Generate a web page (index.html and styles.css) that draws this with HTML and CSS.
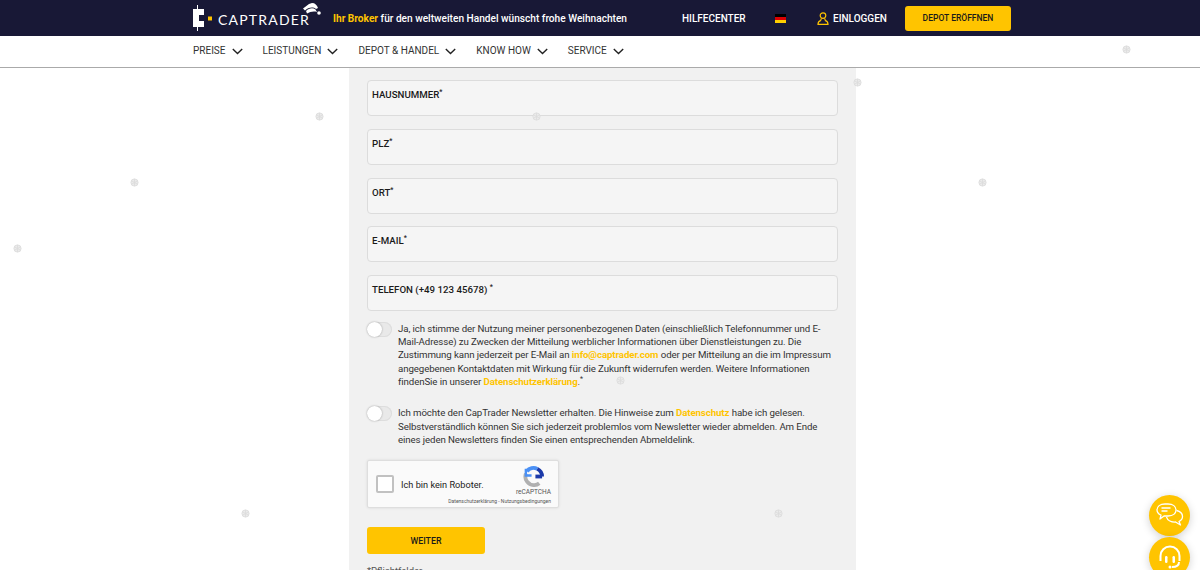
FILE: index.html
```html
<!DOCTYPE html>
<html lang="de">
<head>
    <meta charset="UTF-8">
    <meta name="viewport" content="width=device-width, initial-scale=1.0">
    <title>CapTrader - Depot eröffnen</title>
    <link rel="stylesheet" href="styles.css">
</head>
<body>

    <header class="topbar">
        <a class="logo" href="#">
            <svg class="logo-mark" width="19" height="26" viewBox="0 0 19 26">
                <path d="M4 0h1v4H4zM4 22h1v4H4z" fill="#fff"/>
                <path d="M0 4h11v6H6v6h5v6H0z" fill="#fff"/>
                <rect x="15" y="11.500" width="4" height="4" fill="#ffc400"/>
            </svg>
            <span class="logo-text">CAPTRADER</span>
            <svg class="logo-hat" width="18" height="12" viewBox="0 0 18 12">
                <path d="M0 5.500 6 1l3-1c3 0 5 2 6 5l-2 1C10 3.500 5 4.500 2 7.500z" fill="#fff"/>
                <path d="M3 8c3-3 7-3.500 9.500-1.500L14 9c-4-1-7 0-10 1.500z" fill="#fff"/>
                <circle cx="16" cy="10" r="1.800" fill="#fff"/>
            </svg>
        </a>
        <p class="tagline"><b>Ihr Broker</b> für den weltweiten Handel wünscht frohe Weihnachten</p>
        <a class="top-link help" href="#">HILFECENTER</a>
        <span class="flag"></span>
        <svg class="user-icon" width="12" height="13" viewBox="0 0 12 13" fill="none" stroke="#ffc400" stroke-width="1.200">
            <circle cx="6" cy="3.600" r="2.800"/>
            <path d="M4.400 6.400 3.600 8.600C2 9 1 10 1 12.400h10C11 10 10 9 8.400 8.600L7.600 6.400"/>
        </svg>
        <a class="top-link login" href="#">EINLOGGEN</a>
        <a class="btn-depot" href="#">DEPOT ERÖFFNEN</a>
    </header>

    <nav class="mainnav">
        <a href="#">PREISE <svg class="chev" width="11" height="7" viewBox="0 0 11 7"><path d="M.8 1l4.700 4.600L10.200 1"/></svg></a>
        <a href="#">LEISTUNGEN <svg class="chev" width="11" height="7" viewBox="0 0 11 7"><path d="M.8 1l4.700 4.600L10.200 1"/></svg></a>
        <a href="#">DEPOT &amp; HANDEL <svg class="chev" width="11" height="7" viewBox="0 0 11 7"><path d="M.8 1l4.700 4.600L10.200 1"/></svg></a>
        <a href="#">KNOW HOW <svg class="chev" width="11" height="7" viewBox="0 0 11 7"><path d="M.8 1l4.700 4.600L10.200 1"/></svg></a>
        <a href="#">SERVICE <svg class="chev" width="11" height="7" viewBox="0 0 11 7"><path d="M.8 1l4.700 4.600L10.200 1"/></svg></a>
    </nav>

    <main class="panel">
        <form class="form">
            <label class="field">HAUSNUMMER<sup>*</sup></label>
            <label class="field">PLZ<sup>*</sup></label>
            <label class="field">ORT<sup>*</sup></label>
            <label class="field">E-MAIL<sup>*</sup></label>
            <label class="field">TELEFON (+49 123 45678) <sup>*</sup></label>

            <div class="consent first">
                <span class="toggle"></span>
                <p>Ja, ich stimme der Nutzung meiner personenbezogenen Daten (einschließlich Telefonnummer und E-Mail-Adresse) zu Zwecken der Mitteilung werblicher Informationen über Dienstleistungen zu. Die Zustimmung kann jederzeit per E-Mail an <a href="#">info@captrader.com</a> oder per Mitteilung an die im Impressum angegebenen Kontaktdaten mit Wirkung für die Zukunft widerrufen werden. Weitere Informationen findenSie in unserer <a href="#">Datenschutzerklärung</a>.<sup>*</sup></p>
            </div>

            <div class="consent">
                <span class="toggle"></span>
                <p>Ich möchte den CapTrader Newsletter erhalten. Die Hinweise zum <a href="#">Datenschutz</a> habe ich gelesen. Selbstverständlich können Sie sich jederzeit problemlos vom Newsletter wieder abmelden. Am Ende eines jeden Newsletters finden Sie einen entsprechenden Abmeldelink.</p>
            </div>

            <div class="captcha">
                <span class="captcha-box"></span>
                <span class="captcha-label">Ich bin kein Roboter.</span>
                <div class="captcha-brand">
                    <svg width="21" height="21" viewBox="0 0 22 22" fill="none" stroke-width="4">
                        <path d="M4 5.500A9 9 0 0 1 15 3" stroke="#4a90f5"/>
                        <path d="M15 3a9 9 0 0 1 5 8" stroke="#1c3aa9"/>
                        <path d="M20 11h-7" stroke="#1c3aa9"/>
                        <path d="M3 8a9 9 0 0 0 9 12 9 9 0 0 0 5-2" stroke="#b0b0b0"/>
                        <path d="M3 3v7h6" stroke="#4a90f5" stroke-width="2.500"/>
                    </svg>
                    <span class="captcha-name">reCAPTCHA</span>
                </div>
                <span class="captcha-terms">Datenschutzerklärung - Nutzungsbedingungen</span>
            </div>

            <button class="btn-next" type="button">WEITER</button>
            <p class="required">*Pflichtfelder</p>
        </form>
    </main>

    <a class="fab chat" href="#">
        <svg width="28" height="26" viewBox="0 0 28 26" fill="none" stroke="#fff" stroke-width="1.300" stroke-linejoin="round">
            <path d="M9 1h3c5 0 8 2.500 8 6s-3 6-8 6H8l-4 3 1-3.800C2.500 11 1 9.300 1 7c0-3.500 3-6 8-6z"/>
            <path d="M5.500 5h9M5.500 8h6"/>
            <path d="M20.500 7.500c3.500.8 6 3 6 6 0 2.200-1.300 4-3.500 5l1.500 3.500-5-3c-4 .3-8-1.500-9-5"/>
        </svg>
    </a>
    <a class="fab support" href="#">
        <svg width="26" height="28" viewBox="0 0 26 28" fill="none" stroke="#fff" stroke-width="2">
            <path d="M3.500 17v-5a9.500 9.500 0 0 1 19 0v5"/>
            <rect x="8" y="12" width="2.500" height="7" rx="1.200" fill="#fff" stroke="none"/>
            <rect x="15.500" y="12" width="2.500" height="7" rx="1.200" fill="#fff" stroke="none"/>
            <path d="M22 18c0 3.500-3 5-7 5"/>
            <circle cx="13" cy="23" r="1.500" fill="#fff" stroke="none"/>
        </svg>
    </a>

    <!-- Schneeflocken -->
    <svg class="flake" style="left:1121px;top:44px" viewBox="0 0 10 10"><circle cx="5" cy="5" r="4"/><path d="M5 1v8M1.500 3l7 4M1.500 7l7-4"/></svg>
    <svg class="flake" style="left:852px;top:77px" viewBox="0 0 10 10"><circle cx="5" cy="5" r="4"/><path d="M5 1v8M1.500 3l7 4M1.500 7l7-4"/></svg>
    <svg class="flake" style="left:314px;top:111px" viewBox="0 0 10 10"><circle cx="5" cy="5" r="4"/><path d="M5 1v8M1.500 3l7 4M1.500 7l7-4"/></svg>
    <svg class="flake" style="left:531px;top:111px" viewBox="0 0 10 10"><circle cx="5" cy="5" r="4"/><path d="M5 1v8M1.500 3l7 4M1.500 7l7-4"/></svg>
    <svg class="flake" style="left:129px;top:177px" viewBox="0 0 10 10"><circle cx="5" cy="5" r="4"/><path d="M5 1v8M1.500 3l7 4M1.500 7l7-4"/></svg>
    <svg class="flake" style="left:977px;top:177px" viewBox="0 0 10 10"><circle cx="5" cy="5" r="4"/><path d="M5 1v8M1.500 3l7 4M1.500 7l7-4"/></svg>
    <svg class="flake" style="left:12px;top:243px" viewBox="0 0 10 10"><circle cx="5" cy="5" r="4"/><path d="M5 1v8M1.500 3l7 4M1.500 7l7-4"/></svg>
    <svg class="flake" style="left:615px;top:375px" viewBox="0 0 10 10"><circle cx="5" cy="5" r="4"/><path d="M5 1v8M1.500 3l7 4M1.500 7l7-4"/></svg>
    <svg class="flake" style="left:240px;top:508px" viewBox="0 0 10 10"><circle cx="5" cy="5" r="4"/><path d="M5 1v8M1.500 3l7 4M1.500 7l7-4"/></svg>
    <svg class="flake" style="left:773px;top:508px" viewBox="0 0 10 10"><circle cx="5" cy="5" r="4"/><path d="M5 1v8M1.500 3l7 4M1.500 7l7-4"/></svg>

</body>
</html>
```

FILE: styles.css
```css
html, body {
    height: 570px;
    overflow: hidden;
}
body {
    margin: 0;
    background-color: #fff;
    font-family: "Roboto", "Open Sans", sans-serif;
    color: #1a1a1a;
    position: relative;
}
a {
    text-decoration: none;
    color: inherit;
}
.topbar {
    height: 36px;
    background-color: #181836;
    display: flex;
    align-items: center;
    padding-left: 193px;
    color: #fff;
}
.logo {
    display: flex;
    align-items: center;
    width: 140px;
    position: relative;
}
.logo-mark {
    margin-right: 6px;
}
.logo-text {
    font-family: "Lato", sans-serif;
    font-weight: 400;
    font-size: 14px;
    letter-spacing: 1.200px;
    margin-top: 3px;
}
.logo-hat {
    position: absolute;
    left: 110px;
    top: -2px;
}
.tagline {
    margin: 0;
    width: 349px;
    font-size: 10.150px;
    font-weight: 500;
    white-space: nowrap;
}
.tagline b {
    color: #ffc400;
    font-weight: 700;
}
.top-link {
    font-size: 10px;
    font-weight: 500;
}
.help {
    width: 93px;
}
.login {
    width: 72px;
}
.flag {
    width: 11px;
    height: 9px;
    margin-right: 31px;
    background: linear-gradient(#000 33%, #d00 33%, #d00 66%, #ffce00 66%);
}
.user-icon {
    margin-right: 4px;
}
.btn-depot {
    width: 106px;
    height: 25px;
    line-height: 25px;
    text-align: center;
    background-color: #ffc400;
    border-radius: 3px;
    color: #1a1a1a;
    font-size: 8.500px;
    font-weight: 500;
}
.mainnav {
    height: 29px;
    padding: 0 0 2px 193px;
    display: flex;
    align-items: center;
    gap: 20px;
    border-bottom: 1px solid #aaa;
    background-color: #fff;
    font-size: 10px;
    color: #333;
}
.mainnav a {
    display: flex;
    align-items: center;
    gap: 6px;
}
.chev {
    fill: none;
    stroke: #222;
    stroke-width: 1.400;
    margin-top: 2px;
}
.panel {
    width: 471px;
    margin-left: 349px;
    padding: 12px 18px 0;
    background-color: #f1f1f1;
    height: 490px;
}
.form {
    display: flex;
    flex-direction: column;
}
.field {
    display: block;
    box-sizing: border-box;
    height: 36px;
    margin-bottom: 12.750px;
    padding: 7px 4px 0;
    background-color: #f5f5f5;
    border: 1px solid #dcdcdc;
    border-radius: 4px;
    font-size: 9.700px;
    font-weight: 500;
    line-height: 13px;
    color: #1a1a1a;
}
sup {
    font-size: 7px;
    line-height: 0;
}
.consent {
    display: flex;
    gap: 6px;
    margin-bottom: 18px;
    font-size: 9.700px;
    letter-spacing: -0.100px;
    line-height: 13.300px;
    color: #333;
}
.consent.first {
    margin-top: -2px;
}
.consent p {
    margin: 0;
}
.consent a {
    color: #ffc400;
    font-weight: 700;
}
.toggle {
    flex: none;
    width: 25px;
    height: 15px;
    border-radius: 8px;
    background-color: #e9e9e9;
    position: relative;
    box-shadow: inset 0 0 0 1px #ddd;
}
.toggle::before {
    content: "";
    position: absolute;
    left: 0;
    top: 0;
    width: 15px;
    height: 15px;
    border-radius: 50%;
    background-color: #fff;
    box-shadow: 0 0 2px rgba(0, 0, 0, 0.35);
}
.captcha {
    box-sizing: border-box;
    width: 192px;
    height: 48px;
    background-color: #fafafa;
    border: 1px solid #dedede;
    box-shadow: 0 0 3px rgba(0, 0, 0, 0.1);
    border-radius: 2px;
    display: flex;
    align-items: center;
    padding-left: 8px;
    position: relative;
    margin-top: -4px;
}
.captcha-box {
    box-sizing: border-box;
    width: 18px;
    height: 18px;
    background-color: #fff;
    border: 2px solid #c1c1c1;
    border-radius: 2px;
    margin-right: 7px;
}
.captcha-label {
    font-size: 9.200px;
    color: #222;
}
.captcha-brand {
    position: absolute;
    right: 7px;
    top: 5px;
    display: flex;
    flex-direction: column;
    align-items: center;
    gap: 1px;
}
.captcha-name {
    font-size: 6.500px;
    color: #555;
}
.captcha-terms {
    position: absolute;
    right: 7px;
    bottom: 3px;
    font-size: 5px;
    color: #555;
    white-space: nowrap;
}
.btn-next {
    width: 118px;
    height: 27px;
    margin-top: 19px;
    padding: 0;
    background-color: #ffc400;
    border: 0;
    border-radius: 3px;
    color: #1a1a1a;
    font-family: inherit;
    font-size: 8.800px;
    font-weight: 500;
}
.required {
    margin: 11px 0 0;
    font-size: 9.500px;
    color: #555;
}
.fab {
    position: absolute;
    left: 1149px;
    width: 41px;
    height: 41px;
    border-radius: 50%;
    background-color: #ffc400;
    box-shadow: 0 2px 8px rgba(0, 0, 0, 0.18);
    display: flex;
    align-items: center;
    justify-content: center;
}
.chat {
    top: 495px;
}
.support {
    top: 537px;
}
.flake {
    position: absolute;
    width: 9px;
    height: 9px;
    margin: 0.500px;
    fill: #ebebeb;
    stroke: #dcdcdc;
    stroke-width: 1;
}
```
